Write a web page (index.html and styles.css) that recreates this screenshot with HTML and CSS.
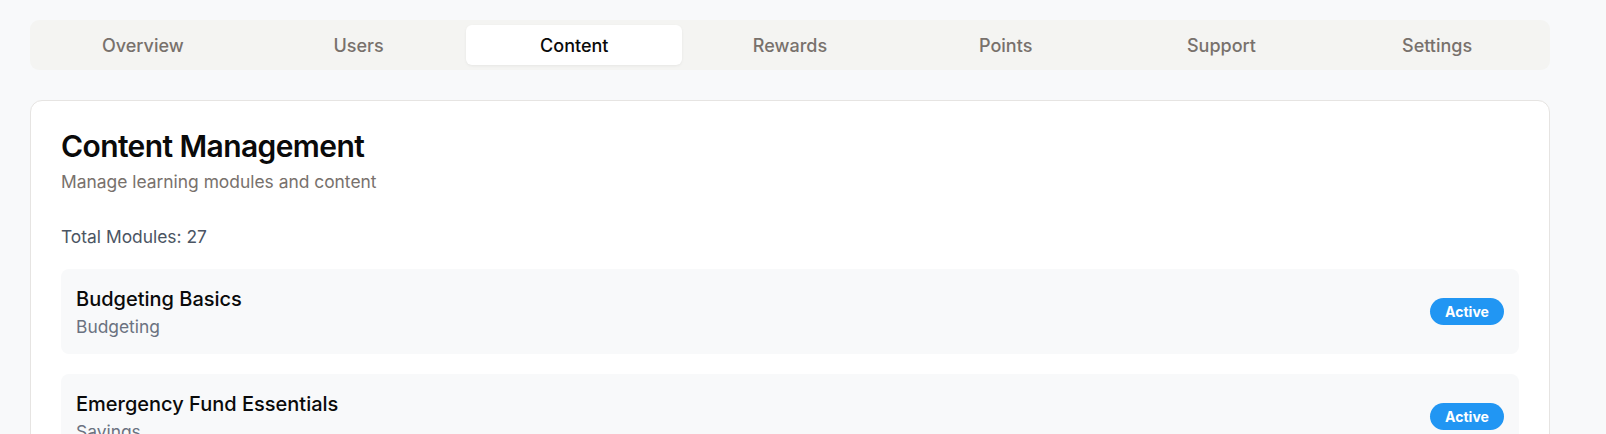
FILE: index.html
```html
<!DOCTYPE html>
<html lang="en">
<head>
<meta charset="utf-8">
<title>Content Management</title>
<link rel="stylesheet" href="styles.css">
</head>
<body>
<div class="page">
  <nav class="tabs">
    <div class="tab">Overview</div>
    <div class="tab">Users</div>
    <div class="tab active">Content</div>
    <div class="tab">Rewards</div>
    <div class="tab">Points</div>
    <div class="tab">Support</div>
    <div class="tab">Settings</div>
  </nav>
  <section class="card">
    <h1 class="title">Content Management</h1>
    <p class="subtitle">Manage learning modules and content</p>
    <p class="total">Total Modules: 27</p>
    <div class="modules">
      <div class="module">
        <div class="module-info">
          <div class="module-name">Budgeting Basics</div>
          <div class="module-cat">Budgeting</div>
        </div>
        <span class="badge">Active</span>
      </div>
      <div class="module">
        <div class="module-info">
          <div class="module-name">Emergency Fund Essentials</div>
          <div class="module-cat">Savings</div>
        </div>
        <span class="badge">Active</span>
      </div>
    </div>
  </section>
</div>
</body>
</html>
```

FILE: styles.css
```css
* { box-sizing: border-box; }

html, body {
  margin: 0;
  padding: 0;
  background: #f8f9fa;
  font-family: Inter, "Noto Sans", sans-serif;
}

.page {
  width: 1520px;
  margin: 0 0 0 30px;
  padding-top: 20px;
}

.tabs {
  display: grid;
  grid-template-columns: repeat(7, 1fr);
  height: 50px;
  padding: 5px;
  background: #f4f4f2;
  border-radius: 9px;
}

.tab {
  display: flex;
  align-items: center;
  justify-content: center;
  font-size: 18px;
  font-weight: 500;
  color: #78716c;
  border-radius: 6px;
}

.tab.active {
  background: #ffffff;
  color: #0a0a0a;
  box-shadow: 0 1px 3px rgba(0, 0, 0, 0.06);
}

.card {
  margin-top: 30px;
  background: #ffffff;
  border: 1px solid #e6e4e2;
  border-radius: 12px;
  padding: 30px 30px 30px;
}

.title {
  margin: 0;
  font-size: 30px;
  line-height: 30px;
  font-weight: 600;
  color: #0a0a0a;
  letter-spacing: -0.6px;
}

.subtitle {
  margin: 7px 0 0;
  font-size: 17.4px;
  line-height: 27px;
  color: #78716c;
}

.total {
  margin: 28px 0 0;
  font-size: 17.4px;
  line-height: 27px;
  color: #4b5563;
}

.modules {
  margin-top: 19px;
  display: flex;
  flex-direction: column;
  gap: 20px;
}

.module {
  display: flex;
  align-items: center;
  justify-content: space-between;
  background: #f8f9fa;
  border-radius: 8px;
  padding: 15px;
}

.module-name {
  font-size: 20px;
  line-height: 30px;
  font-weight: 500;
  color: #0a0a0a;
}

.module-cat {
  font-size: 17.4px;
  line-height: 25px;
  color: #6b7280;
}

.badge {
  display: inline-flex;
  align-items: center;
  justify-content: center;
  height: 27px;
  width: 74px;
  border-radius: 14px;
  background: #2196f3;
  color: #ffffff;
  font-size: 14px;
  font-weight: 700;
}
```
